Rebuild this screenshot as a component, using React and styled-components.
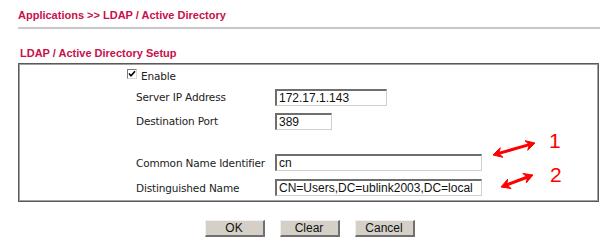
import React from "react";
import styled, { createGlobalStyle } from "styled-components";

const Global = createGlobalStyle`
  html, body { margin: 0; padding: 0; background: #fff; }
  body { width: 600px; height: 249px; overflow: hidden; }
`;

const Page = styled.div`
  position: relative;
  width: 600px;
  height: 249px;
  padding: 0 1px 0 18px;
  box-sizing: border-box;
  font-family: "DejaVu Sans", Verdana, sans-serif;
`;

const Title = styled.div`
  font-family: "Liberation Sans", Arial, sans-serif;
  font-weight: bold;
  font-size: 11px;
  line-height: 13px;
  color: #c8104a;
  padding-top: 9px;
  height: 18px;
  box-sizing: border-box;
`;

const Separator = styled.div`
  height: 2px;
  background: #c8c8c8;
  margin-top: 9px;
  margin-right: -1px;
`;

const SectionTitle = styled(Title)`
  padding: 0 0 0 2px;
  margin-top: 18px;
  height: 16px;
`;

const Panel = styled.div`
  border: 1px solid #5a5a5a;
  box-shadow: inset 1px 1px 0 #a0a0a0, inset -1px -1px 0 #a0a0a0;
  padding: 1px;
  height: 139px;
  box-sizing: border-box;
`;

const Row = styled.div`
  display: grid;
  grid-template-columns: 116px 139px 1fr;
  align-items: center;
  height: ${(p) => p.$h}px;
`;

const EnableRow = styled.div`
  display: flex;
  align-items: center;
  height: 20px;
  padding-left: 107px;
  padding-top: 1px;
  box-sizing: border-box;
`;

const Box = styled.span`
  display: inline-flex;
  align-items: center;
  justify-content: center;
  width: 10px;
  height: 10px;
  box-sizing: border-box;
  border-top: 1px solid #7a7a7a;
  border-left: 1px solid #7a7a7a;
  border-right: 1px solid #d8d8d8;
  border-bottom: 1px solid #d8d8d8;
  background: #fff;
  margin-right: 4px;
  margin-top: -4px;
`;

const Label = styled.span`
  grid-column: ${(p) => p.$col || 2};
  font-size: 10.5px;
  letter-spacing: -0.15px;
  color: #222;
  white-space: nowrap;
`;

const Input = styled.input`
  grid-column: 3;
  width: ${(p) => p.$w}px;
  height: 17px;
  box-sizing: border-box;
  padding: 0 0 0 2px;
  margin: 0;
  font-family: "Liberation Sans", Arial, sans-serif;
  font-size: 12px;
  color: #111;
  border-top: 2px solid #6e6e6e;
  border-left: 2px solid #6e6e6e;
  border-right: 1px solid #d4d0c8;
  border-bottom: 1px solid #d4d0c8;
  outline: none;
  background: #fff;
`;

const Spacer = styled.div`
  height: ${(p) => p.$h}px;
`;

const Buttons = styled.div`
  display: flex;
  justify-content: center;
  gap: 15px;
  margin-top: 18px;
  padding-left: 2px;
`;

const Button = styled.button`
  width: 60px;
  height: 17px;
  padding: 0;
  font-family: "Liberation Sans", Arial, sans-serif;
  font-size: 12px;
  color: #111;
  background: #d4d0c8;
  border-top: 1px solid #f0f0f0;
  border-left: 1px solid #f0f0f0;
  border-right: 2px solid #707070;
  border-bottom: 2px solid #707070;
  line-height: 13px;
`;

const Note = styled.span`
  position: absolute;
  left: ${(p) => p.$x}px;
  top: ${(p) => p.$y}px;
  font-family: "Liberation Sans", Arial, sans-serif;
  font-size: 21px;
  line-height: 21px;
  color: #f00;
`;

const Arrows = styled.svg`
  position: absolute;
  left: 0;
  top: 0;
  pointer-events: none;
`;

function DoubleArrow({ x1, y1, x2, y2 }) {
  const dx = x2 - x1;
  const dy = y2 - y1;
  const len = Math.hypot(dx, dy);
  const ux = dx / len;
  const uy = dy / len;
  const px = -uy;
  const py = ux;
  const hl = 9;
  const hw = 5;
  const head = (tx, ty, dir) => {
    const bx = tx - dir * ux * hl;
    const by = ty - dir * uy * hl;
    return `${tx},${ty} ${bx + px * hw},${by + py * hw} ${tx - dir * ux * (hl - 3)},${ty - dir * uy * (hl - 3)} ${bx - px * hw},${by - py * hw}`;
  };
  return (
    <g fill="#f00" stroke="#f00">
      <line x1={x1 + ux * 5} y1={y1 + uy * 5} x2={x2 - ux * 5} y2={y2 - uy * 5} strokeWidth="3" />
      <polygon points={head(x1, y1, -1)} strokeWidth="1" strokeLinejoin="round" />
      <polygon points={head(x2, y2, 1)} strokeWidth="1" strokeLinejoin="round" />
    </g>
  );
}

export default function App() {
  return (
    <>
      <Global />
      <Page>
        <Title>Applications &gt;&gt; LDAP / Active Directory</Title>
        <Separator />
        <SectionTitle>LDAP / Active Directory Setup</SectionTitle>
        <Panel>
          <EnableRow>
            <Box>
              <svg width="8" height="8" viewBox="0 0 8 8">
                <path d="M1 3.5 L3 5.8 L7 1.2" fill="none" stroke="#000" strokeWidth="1.6" />
              </svg>
            </Box>
            <Label>Enable</Label>
          </EnableRow>
          <Row $h={24}>
            <Label>Server IP Address</Label>
            <Input $w={112} defaultValue="172.17.1.143" />
          </Row>
          <Row $h={24}>
            <Label>Destination Port</Label>
            <Input $w={57} defaultValue="389" />
          </Row>
          <Spacer $h={17} />
          <Row $h={25}>
            <Label>Common Name Identifier</Label>
            <Input $w={207} defaultValue="cn" />
          </Row>
          <Row $h={25}>
            <Label>Distinguished Name</Label>
            <Input $w={207} defaultValue="CN=Users,DC=ublink2003,DC=local" />
          </Row>
        </Panel>
        <Buttons>
          <Button>OK</Button>
          <Button>Clear</Button>
          <Button>Cancel</Button>
        </Buttons>
        <Arrows width="600" height="249">
          <DoubleArrow x1={493} y1={155} x2={535} y2={143} />
          <DoubleArrow x1={501} y1={187} x2={533} y2={175} />
        </Arrows>
        <Note $x={549} $y={130}>1</Note>
        <Note $x={550} $y={164}>2</Note>
      </Page>
    </>
  );
}
